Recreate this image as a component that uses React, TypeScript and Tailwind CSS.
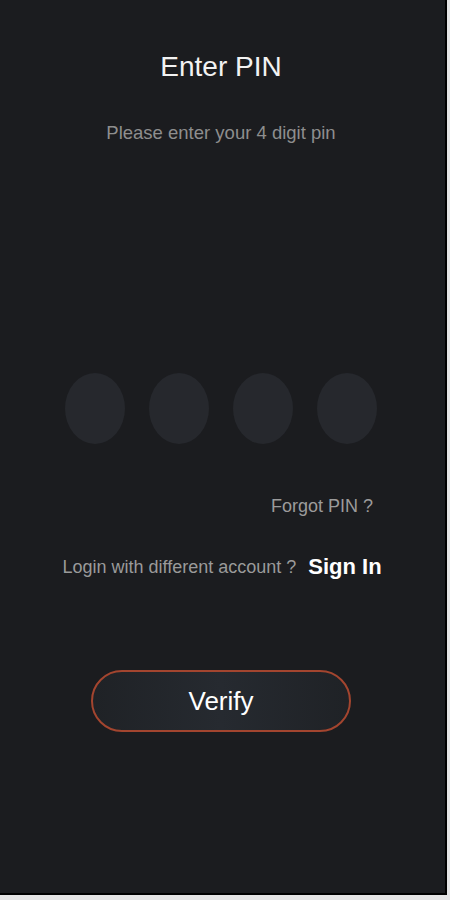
const pins = [0, 1, 2, 3];

const App = () => {
  return (
    <div className="w-[450px] h-[900px] bg-[#e4e4e4] font-['Liberation_Sans',Arial,sans-serif]">
      <div className="w-[447px] h-[895px] bg-[#1b1c1f] border-r-2 border-b-2 border-black flex flex-col items-center pr-[3px]">
        <h1 className="mt-[48px] text-[28px] leading-[38px] text-[#f2f2f2] font-medium">Enter PIN</h1>
        <p className="mt-[36px] text-[18.5px] leading-[22px] text-[#8e8e8e]">Please enter your 4 digit pin</p>

        <div className="mt-[229px] flex gap-[24px]">
          {pins.map((pin) => (
            <div key={pin} className="w-[60px] h-[71px] rounded-[50%] bg-[#26282d]" />
          ))}
        </div>

        <div className="w-full mt-[51px] flex justify-end pr-[69px]">
          <span className="text-[18px] leading-[22px] text-[#9b9b9b]">Forgot PIN ?</span>
        </div>

        <div className="mt-[37px] flex items-center gap-[12px] pl-[2px]">
          <span className="text-[18px] leading-[22px] text-[#9a9a9a]">Login with different account ?</span>
          <button className="text-[22px] leading-[26px] font-bold text-white">Sign In</button>
        </div>

        <button className="mt-[90px] w-[260px] h-[62px] rounded-full border-2 border-[#a3452f] bg-gradient-to-r from-[#1f2226] via-[#262a30] to-[#1f2226] text-[26px] text-white font-medium">
          Verify
        </button>
      </div>
    </div>
  );
};

export default App;
